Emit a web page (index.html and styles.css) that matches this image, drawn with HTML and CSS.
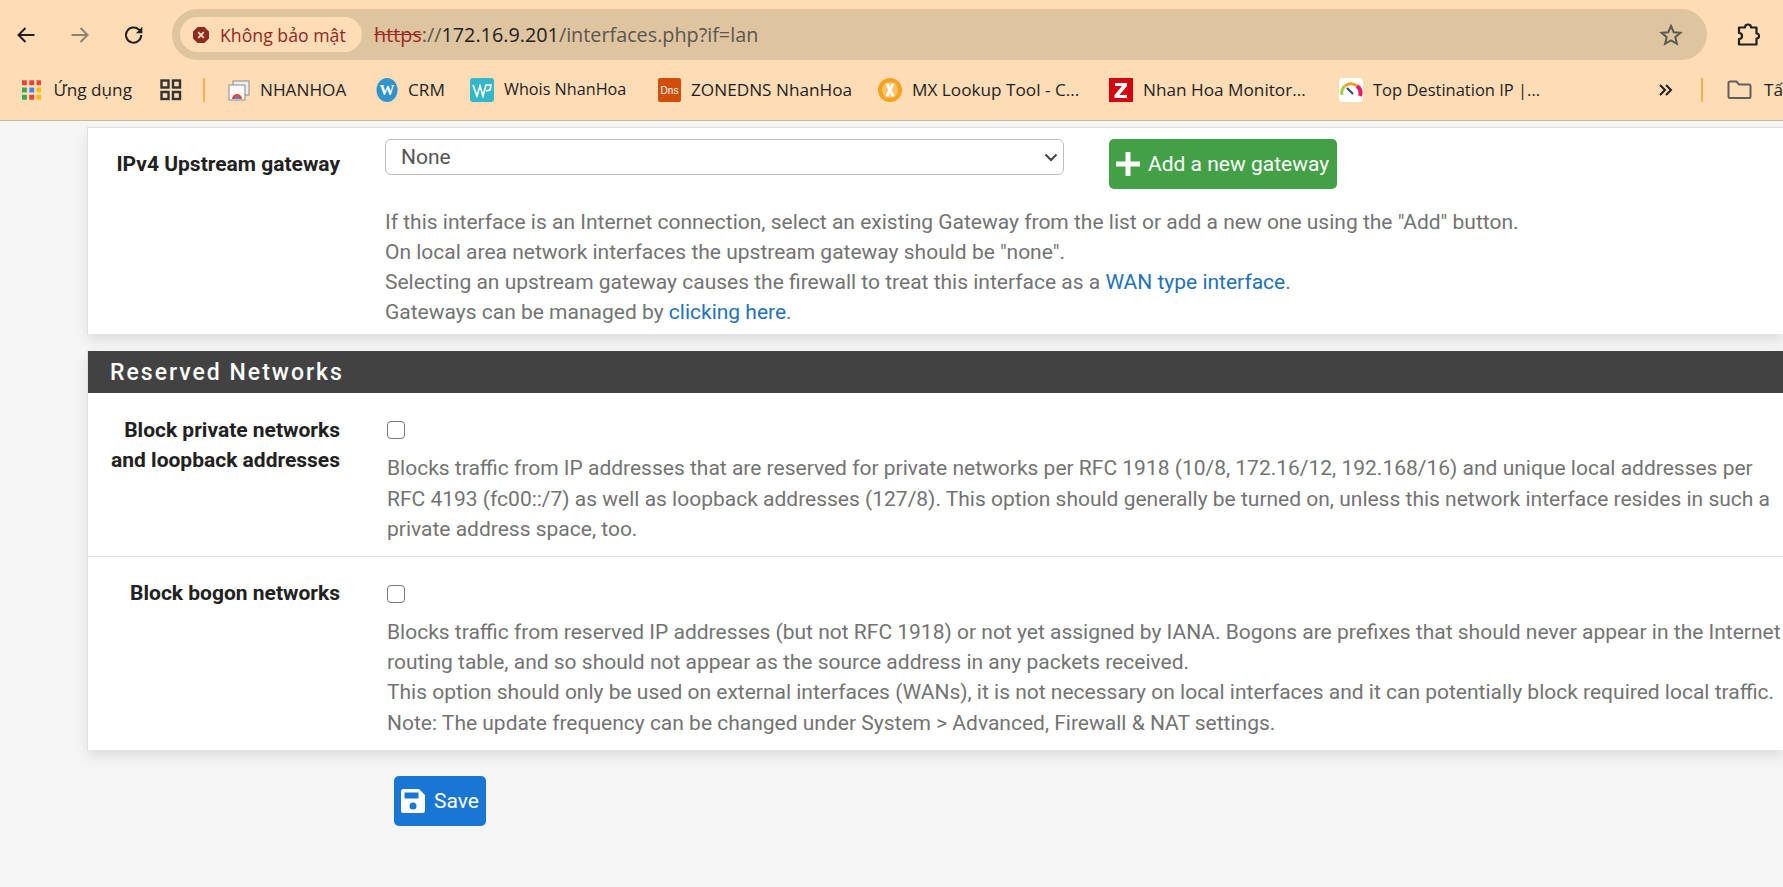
FILE: index.html
```html
<!DOCTYPE html>
<html lang="vi">
<head>
  <meta charset="utf-8">
  <title>Interfaces: LAN</title>
  <link rel="stylesheet" href="styles.css">
</head>
<body>
  <header class="chrome">
    <div class="toolbar">
      <svg class="nav nav-back" width="22" height="22" viewBox="0 0 22 22"><path d="M19.5 11H3.5M10.5 4l-7 7 7 7" fill="none" stroke="#1f1f1f" stroke-width="2"/></svg>
      <svg class="nav nav-forward" width="22" height="22" viewBox="0 0 22 22"><path d="M2.5 11h16M11.5 4l7 7-7 7" fill="none" stroke="#8c8271" stroke-width="2"/></svg>
      <svg class="nav nav-reload" width="22" height="22" viewBox="0 0 22 22"><path d="M18.2 11a7.6 7.6 0 1 1-2.3-5.4L18.5 8" fill="none" stroke="#1f1f1f" stroke-width="2"/><path d="M19.3 2.8v6.4h-6.4z" fill="#1f1f1f"/></svg>
      <div class="omnibox">
        <div class="chip">
          <svg width="18" height="18" viewBox="0 0 18 18"><path d="M5.6 1h6.8L17 5.6v6.8L12.400 17H5.600L1 12.400V5.600z" fill="#8f2a22"/><path d="M6.200 6.200l5.600 5.600M11.800 6.200l-5.600 5.600" stroke="#fddcb6" stroke-width="1.800"/></svg>
          <span>Không bảo mật</span>
        </div>
        <div class="url"><span class="scheme">https</span><span class="url-dim">://</span><span class="host">172.16.9.201</span><span class="url-dim">/interfaces.php?if=lan</span></div>
        <svg class="star" width="24" height="24" viewBox="0 0 24 24"><path d="M12 3l2.700 6.200 6.700.6-5.100 4.400 1.600 6.600L12 17.300l-5.900 3.500 1.600-6.600-5.100-4.400 6.700-.6z" fill="none" stroke="#5c5a55" stroke-width="2"/></svg>
      </div>
      <svg class="puzzle" width="26" height="26" viewBox="0 0 26 26"><path d="M4 5.500h6a3 3 0 0 1 6 0h5.500v6a2.500 2.500 0 0 1 0 5v6H4v-5.500a3 3 0 0 0 0-6z" fill="none" stroke="#1f1f1f" stroke-width="2.200" stroke-linejoin="round"/></svg>
    </div>
    <nav class="bookmarks">
      <a class="bm bm-apps">
        <svg width="20" height="20" viewBox="0 0 20 20">
          <g fill="#ea4335"><rect x="0" y="0" width="5" height="5"/><rect x="7.500" y="0" width="5" height="5"/><rect x="15" y="0" width="5" height="5"/></g>
          <rect x="0" y="7.500" width="5" height="5" fill="#34a853"/><rect x="7.500" y="7.500" width="5" height="5" fill="#4285f4"/><rect x="15" y="7.500" width="5" height="5" fill="#fbbc05"/>
          <rect x="0" y="15" width="5" height="5" fill="#34a853"/><rect x="7.500" y="15" width="5" height="5" fill="#ea4335"/><rect x="15" y="15" width="5" height="5" fill="#fbbc05"/>
        </svg>
        <span>Ứng dụng</span>
      </a>
      <svg class="bm-grid" width="22" height="22" viewBox="0 0 22 22"><g fill="none" stroke="#333" stroke-width="2.400"><rect x="1.500" y="1.500" width="7" height="7"/><rect x="13" y="1.500" width="7" height="7"/><rect x="1.500" y="13" width="7" height="7"/><rect x="13" y="13" width="7" height="7"/></g></svg>
      <i class="bm-sep bm-sep-first"></i>
      <a class="bm bm-nhanhoa">
        <svg width="22" height="22" viewBox="0 0 22 22"><rect x="5" y="2" width="16" height="14" fill="#eee" stroke="#8a8a8a"/><rect x="1" y="6" width="16" height="15" fill="#fafafa" stroke="#8a8a8a"/><path d="M4 20a5 5 0 0 1 10 0z" fill="#ea4335"/><path d="M6.500 20a2.500 2.500 0 0 1 5 0z" fill="#4285f4"/></svg>
        <span>NHANHOA</span>
      </a>
      <a class="bm bm-crm">
        <svg width="22" height="24" viewBox="0 0 22 24"><ellipse cx="11" cy="12" rx="10.500" ry="12" fill="#2f93cf"/><text x="11" y="17" class="glyph-w">W</text></svg>
        <span>CRM</span>
      </a>
      <a class="bm bm-whois">
        <svg width="24" height="24" viewBox="0 0 24 24"><rect width="24" height="24" rx="3" fill="#35b6c9"/><path d="M3 7l4 11 3-10 3 10 3-11h5l-1 5-4 1" fill="none" stroke="#fff" stroke-width="1.600"/></svg>
        <span>Whois NhanHoa</span>
      </a>
      <a class="bm bm-dns">
        <svg width="23" height="24" viewBox="0 0 23 24"><rect width="23" height="24" rx="2" fill="#d14d09"/><text x="11.500" y="16" class="glyph-dns">Dns</text></svg>
        <span>ZONEDNS NhanHoa</span>
      </a>
      <a class="bm bm-mx">
        <svg width="24" height="24" viewBox="0 0 24 24"><circle cx="12" cy="12" r="12" fill="#f7a11f"/><circle cx="12" cy="12" r="8" fill="#fbc266"/><path d="M7.500 5.500h3.200L12 9l1.300-3.500h3.200L13.800 12l2.900 6.500h-3.300L12 15l-1.400 3.500H7.300l2.900-6.500z" fill="#fff"/></svg>
        <span>MX Lookup Tool - C...</span>
      </a>
      <a class="bm bm-z">
        <svg width="24" height="24" viewBox="0 0 24 24"><rect width="24" height="24" fill="#d40511"/><path d="M6 5h12v3l-7.500 9H18v3H5.500v-3L13 8H6z" fill="#fff"/></svg>
        <span>Nhan Hoa Monitor...</span>
      </a>
      <a class="bm bm-top">
        <svg width="24" height="24" viewBox="0 0 24 24"><rect width="24" height="24" rx="4" fill="#fff"/><path d="M3 17a9 9 0 0 1 3-9" fill="none" stroke="#a5cf3a" stroke-width="3"/><path d="M6 8a9 9 0 0 1 12 0" fill="none" stroke="#f59b23" stroke-width="3"/><path d="M18 8a9 9 0 0 1 3 10" fill="none" stroke="#e6195f" stroke-width="4"/><path d="M8 10l6 6" stroke="#2d4a6b" stroke-width="2"/></svg>
        <span>Top Destination IP |...</span>
      </a>
      <svg class="bm-more" width="15" height="14" viewBox="0 0 15 14"><path d="M2 2l5 5-5 5M8 2l5 5-5 5" fill="none" stroke="#1f1f1f" stroke-width="2"/></svg>
      <i class="bm-sep bm-sep-last"></i>
      <a class="bm bm-folder">
        <svg width="25" height="20" viewBox="0 0 25 20"><path d="M1.500 3a1.500 1.500 0 0 1 1.500-1.500h6.500l2.500 3h10a1.500 1.500 0 0 1 1.500 1.500v10.500a1.500 1.500 0 0 1-1.500 1.500H3a1.500 1.500 0 0 1-1.500-1.500z" fill="none" stroke="#5f5f5f" stroke-width="2"/></svg>
        <span>Tất cả dấu trang</span>
      </a>
    </nav>
  </header>

  <main class="content">
    <section class="panel panel-first">
      <div class="row row-gateway">
        <label class="row-label">IPv4 Upstream gateway</label>
        <div class="row-body">
          <div class="gateway-controls">
            <div class="select-wrap">
              <select class="select"><option>None</option></select>
              <svg class="select-arrow" width="14" height="9" viewBox="0 0 14 9"><path d="M1.500 1.500L7 7l5.500-5.500" fill="none" stroke="#444" stroke-width="2"/></svg>
            </div>
            <button class="btn btn-add" type="button">
              <svg width="24" height="24" viewBox="0 0 24 24"><path d="M9.500 0h5v9.500H24v5h-9.500V24h-5v-9.500H0v-5h9.500z" fill="#fff"/></svg>
              Add a new gateway
            </button>
          </div>
          <p class="help">If this interface is an Internet connection, select an existing Gateway from the list or add a new one using the "Add" button.<br>
          On local area network interfaces the upstream gateway should be "none".<br>
          Selecting an upstream gateway causes the firewall to treat this interface as a <a href="#">WAN type interface</a>.<br>
          Gateways can be managed by <a href="#">clicking here</a>.</p>
        </div>
      </div>
    </section>

    <section class="panel">
      <h2 class="panel-title">Reserved Networks</h2>
      <div class="row row-private">
        <label class="row-label">Block private networks<br>and loopback addresses</label>
        <div class="row-body row-body-check">
          <input class="check" type="checkbox">
          <p class="help">Blocks traffic from IP addresses that are reserved for private networks per RFC 1918 (10/8, 172.16/12, 192.168/16) and unique local addresses per<br>
          RFC 4193 (fc00::/7) as well as loopback addresses (127/8). This option should generally be turned on, unless this network interface resides in such a<br>
          private address space, too.</p>
        </div>
      </div>
      <div class="row row-bogon">
        <label class="row-label">Block bogon networks</label>
        <div class="row-body row-body-check">
          <input class="check" type="checkbox">
          <p class="help">Blocks traffic from reserved IP addresses (but not RFC 1918) or not yet assigned by IANA. Bogons are prefixes that should never appear in the Internet<br>
          routing table, and so should not appear as the source address in any packets received.<br>
          This option should only be used on external interfaces (WANs), it is not necessary on local interfaces and it can potentially block required local traffic.<br>
          Note: The update frequency can be changed under System &gt; Advanced, Firewall &amp; NAT settings.</p>
        </div>
      </div>
    </section>

    <button class="btn btn-save" type="button">
      <svg width="24" height="24" viewBox="0 0 24 24"><path d="M2.500 0H18l6 6v15.500a2.500 2.500 0 0 1-2.500 2.500h-19A2.500 2.500 0 0 1 0 21.500v-19A2.500 2.500 0 0 1 2.500 0z" fill="#fff"/><rect x="3.500" y="3.500" width="14" height="6" fill="#1976d2"/><circle cx="12" cy="17" r="3.500" fill="#1976d2"/></svg>
      Save
    </button>
  </main>
</body>
</html>
```

FILE: styles.css
```css
html, body {
  margin: 0;
  height: 100%;
  overflow: hidden;
  background: #f5f5f5;
  font-family: Roboto, sans-serif;
}

/* browser chrome */
.chrome {
  height: 120px;
  background: #fddcb6;
  border-bottom: 1px solid #c9b8a0;
  font-family: "Open Sans", "Noto Sans", sans-serif;
  overflow: hidden;
}
.toolbar {
  display: flex;
  align-items: center;
  height: 51px;
  padding-top: 9px;
}
.nav { flex: none; }
.nav-back { margin-left: 15px; }
.nav-forward { margin-left: 32px; }
.nav-reload { margin-left: 32px; }
.omnibox {
  display: flex;
  align-items: center;
  width: 1535px;
  height: 51px;
  margin-left: 27px;
  background: #dfc4a0;
  border-radius: 26px;
}
.chip {
  display: flex;
  align-items: center;
  gap: 10px;
  width: 182px;
  height: 35px;
  margin-left: 8px;
  padding-left: 12px;
  box-sizing: border-box;
  border-radius: 18px;
  background: #fddcb6;
  color: #8f2a22;
  font-size: 17.700px;
  white-space: nowrap;
}
.url {
  margin-left: 12px;
  font-size: 19.800px;
  color: #222;
}
.scheme {
  color: #9a2a22;
  text-decoration: line-through;
}
.url-dim { color: #5a5650; }
.host { color: #222; }
.star { margin-left: auto; margin-right: 24px; }
.puzzle { margin-left: 28px; }

.bookmarks {
  display: flex;
  align-items: center;
  height: 42px;
  margin-top: 9px;
  font-size: 17.200px;
  color: #1f1f1f;
  white-space: nowrap;
}
.bm {
  display: flex;
  align-items: center;
  gap: 10px;
  flex: none;
}
.bm span { margin-top: -2px; }
.bm-apps { margin-left: 22px; gap: 12px; width: 110px; }
.bm-grid { margin-left: 28px; flex: none; }
.bm-sep {
  flex: none;
  width: 2px;
  height: 24px;
  background: #f7ae52;
}
.bm-sep-first { margin-left: 21px; }
.bm-nhanhoa { margin-left: 23px; width: 126px; }
.bm-crm { margin-left: 22px; width: 72px; }
.bm-whois { margin-left: 22px; width: 166px; font-size: 16.200px; }
.bm-dns { margin-left: 22px; width: 198px; }
.bm-mx { margin-left: 22px; width: 209px; }
.bm-z { margin-left: 22px; width: 207px; }
.bm-top { margin-left: 23px; width: 205px; font-size: 16.500px; }
.bm-more { margin-left: 114px; flex: none; }
.bm-sep-last { margin-left: 28px; }
.bm-folder { margin-left: 24px; gap: 12px; }
.glyph-w {
  font: bold 15px "Liberation Serif", serif;
  fill: #fff;
  text-anchor: middle;
}
.glyph-dns {
  font: 10px "Liberation Sans", sans-serif;
  fill: #fff;
  text-anchor: middle;
}

/* page */
.content {
  padding-left: 88px;
}
.panel {
  background: #fff;
  box-shadow: -1px 0 0 #e0e0e0, 0 6px 12px rgba(0, 0, 0, .1);
  white-space: nowrap;
}
.panel-first {
  height: 206px;
  margin-top: 6px;
  margin-bottom: 17px;
  border-top: 1px solid #e0e0e0;
}
.panel-title {
  margin: 0;
  height: 42px;
  padding-left: 22px;
  background: #424242;
  color: #fff;
  font-size: 23px;
  font-weight: 500;
  letter-spacing: 2px;
  line-height: 44px;
}
.row {
  display: grid;
  grid-template-columns: 252px 1fr;
  column-gap: 45px;
}
.row-label {
  text-align: right;
  font-size: 21px;
  font-weight: 700;
  line-height: 30px;
  color: #212121;
}
.row-gateway { padding-top: 11px; }
.row-gateway .row-label { padding-top: 10px; }
.gateway-controls {
  display: flex;
  align-items: flex-start;
  gap: 45px;
}
.select-wrap {
  position: relative;
  width: 679px;
  height: 36px;
}
.select {
  appearance: none;
  display: block;
  width: 100%;
  height: 36px;
  padding-left: 15px;
  background: #fff;
  border: 1px solid #bdbdbd;
  border-radius: 6px;
  font: 21px Roboto, sans-serif;
  color: #555;
}
.select-arrow {
  position: absolute;
  right: 6px;
  top: 14px;
}
.btn {
  display: inline-flex;
  align-items: center;
  border: 0;
  border-radius: 5px;
  color: #fff;
  font: 21px Roboto, sans-serif;
  height: 50px;
  white-space: nowrap;
}
.btn-add {
  width: 228px;
  gap: 8px;
  padding: 0 0 0 7px;
  background: #43a047;
}
.btn-save {
  width: 92px;
  gap: 9px;
  margin: 26px 0 0 306px;
  padding: 0 0 0 7px;
  background: #1976d2;
}
.help {
  margin: 18px 0 0;
  font-size: 21px;
  line-height: 30px;
  color: #737373;
}
.help a {
  color: #2372b8;
  text-decoration: none;
}
.row-body-check { padding-left: 2px; }
.check {
  appearance: none;
  display: block;
  width: 18px;
  height: 18px;
  margin: 6px 0 0;
  border: 1.500px solid #777;
  border-radius: 4px;
  background: #fff;
}
.row-private {
  height: 164px;
  padding-top: 22px;
  box-sizing: border-box;
  border-bottom: 1px solid #e0e0e0;
}
.row-bogon {
  height: 193px;
  padding-top: 22px;
  box-sizing: border-box;
}
.row-bogon .row-label { margin-top: -1px; }
.row-private .help { margin-top: 14px; line-height: 30.500px; }
.row-bogon .help { margin-top: 14px; line-height: 30.200px; }
```
